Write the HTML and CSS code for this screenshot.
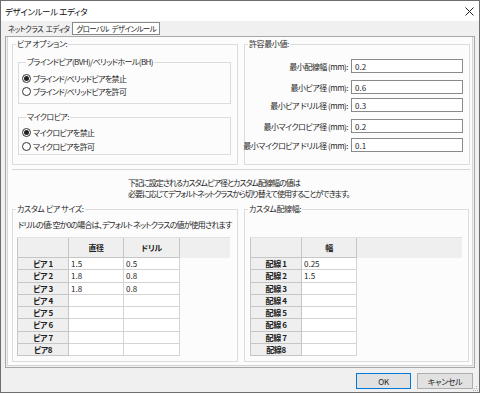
FILE: index.html
```html
<!DOCTYPE html>
<html lang="ja">
<head>
<meta charset="utf-8">
<title>デザインルール エディタ</title>
<link rel="stylesheet" href="styles.css">
</head>
<body>
<div class="win">
  <div class="titlebar">
    <span class="title">デザインルール エディタ</span>
    <svg class="close" width="9" height="9" viewBox="0 0 9 9"><path d="M0.5 0.5L8.5 8.5M8.5 0.5L0.5 8.5" stroke="#222" stroke-width="1" fill="none"/></svg>
  </div>
  <div class="tabs">
    <span class="tab">ネットクラス エディタ</span>
    <span class="tab sel">グローバル デザインルール</span>
  </div>
  <div class="panel">
    <div class="inner">
      <div class="row toprow">
        <fieldset class="grp grp-top">
          <legend>ビア オプション:</legend>
          <fieldset class="sub sub1">
            <legend>ブラインドビア(BVH)/ベリッドホール(BH)</legend>
            <div class="radio r13"><span class="dot on"></span>ブラインド/ベリッドビアを禁止</div>
            <div class="radio r13"><span class="dot"></span>ブラインド/ベリッドビアを許可</div>
          </fieldset>
          <fieldset class="sub sub2">
            <legend>マイクロビア:</legend>
            <div class="radio r14"><span class="dot on"></span>マイクロビアを禁止</div>
            <div class="radio r14"><span class="dot"></span>マイクロビアを許可</div>
          </fieldset>
        </fieldset>
        <fieldset class="grp grp-top">
          <legend>許容最小値:</legend>
          <div class="field f1"><label>最小配線幅 (mm):</label><span class="input">0.2</span></div>
          <div class="field f2"><label>最小ビア径 (mm):</label><span class="input">0.6</span></div>
          <div class="field f3"><label>最小ビア ドリル径 (mm):</label><span class="input">0.3</span></div>
          <div class="field f2"><label>最小マイクロビア径 (mm):</label><span class="input">0.2</span></div>
          <div class="field f5"><label>最小マイクロビア ドリル径 (mm):</label><span class="input">0.1</span></div>
        </fieldset>
      </div>
      <div class="sep"></div>
      <div class="info">
        <div>下記に設定されるカスタムビア径とカスタム配線幅の値は</div>
        <div>必要に応じてデフォルトネットクラスから切り替えて使用することができます。</div>
      </div>
      <div class="row botrow">
        <fieldset class="grp grp-bot grp-left">
          <legend>カスタム ビア サイズ:</legend>
          <div class="note">ドリルの値: 空か0の場合は、デフォルト ネットクラスの値が使用されます</div>
          <div class="grid grid-via">
            <div class="ghead">
              <span class="hc corner"></span><span class="hc c1">直径</span><span class="hc c2">ドリル</span>
            </div>
            <div class="grow"><span class="rl">ビア 1</span><span class="dc c1">1.5</span><span class="dc c2">0.5</span></div>
            <div class="grow"><span class="rl">ビア 2</span><span class="dc c1">1.8</span><span class="dc c2">0.8</span></div>
            <div class="grow"><span class="rl">ビア 3</span><span class="dc c1">1.8</span><span class="dc c2">0.8</span></div>
            <div class="grow"><span class="rl">ビア 4</span><span class="dc c1"></span><span class="dc c2"></span></div>
            <div class="grow"><span class="rl">ビア 5</span><span class="dc c1"></span><span class="dc c2"></span></div>
            <div class="grow"><span class="rl">ビア 6</span><span class="dc c1"></span><span class="dc c2"></span></div>
            <div class="grow"><span class="rl">ビア 7</span><span class="dc c1"></span><span class="dc c2"></span></div>
            <div class="grow"><span class="rl">ビア8</span><span class="dc c1"></span><span class="dc c2"></span></div>
          </div>
        </fieldset>
        <fieldset class="grp grp-bot grp-right">
          <legend>カスタム配線幅:</legend>
          <div class="grid grid-track">
            <div class="ghead">
              <span class="hc corner"></span><span class="hc c1">幅</span>
            </div>
            <div class="grow"><span class="rl">配線 1</span><span class="dc c1">0.25</span></div>
            <div class="grow"><span class="rl">配線 2</span><span class="dc c1">1.5</span></div>
            <div class="grow"><span class="rl">配線 3</span><span class="dc c1"></span></div>
            <div class="grow"><span class="rl">配線 4</span><span class="dc c1"></span></div>
            <div class="grow"><span class="rl">配線 5</span><span class="dc c1"></span></div>
            <div class="grow"><span class="rl">配線 6</span><span class="dc c1"></span></div>
            <div class="grow"><span class="rl">配線 7</span><span class="dc c1"></span></div>
            <div class="grow"><span class="rl">配線8</span><span class="dc c1"></span></div>
          </div>
        </fieldset>
      </div>
    </div>
  </div>
  <div class="footer">
    <button class="btn ok">OK</button>
    <button class="btn">キャンセル</button>
    <svg class="grip" width="5" height="5" viewBox="0 0 5 5"><rect x="3" y="0" width="1" height="1" fill="#b0b0b0"/><rect x="1" y="2" width="1" height="1" fill="#b0b0b0"/><rect x="3" y="2" width="1" height="1" fill="#b0b0b0"/><rect x="0" y="4" width="1" height="1" fill="#b0b0b0"/><rect x="2" y="4" width="1" height="1" fill="#b0b0b0"/><rect x="4" y="4" width="1" height="1" fill="#b0b0b0"/></svg>
  </div>
</div>
</body>
</html>
```

FILE: styles.css
```css
* { box-sizing: border-box; margin: 0; padding: 0; }
html, body { width: 480px; height: 393px; overflow: hidden; }
body {
  font-family: "Noto Sans CJK JP", "Noto Sans", sans-serif;
  font-size: 8px;
  line-height: 11px;
  letter-spacing: -0.4px;
  color: #1e1e1e;
  font-feature-settings: "palt" 1;
  background: #f0f0f0;
}
.win {
  width: 480px; height: 393px;
  border: 1px solid #6e6e6e;
  background: #f0f0f0;
  display: flex; flex-direction: column;
}
.titlebar {
  height: 20px; flex: none;
  background: #fff;
  display: flex; align-items: center; justify-content: space-between;
  padding: 0 5px 0 4px;
}
.title { color: #111; font-size: 8.5px; }
.close { display: block; }
.tabs {
  height: 14px; flex: none; margin-top: 1px;
  display: flex; align-items: stretch;
  padding-left: 4px;
}
.tab {
  flex: none;
  min-width: 67px; height: 13px;
  display: flex; align-items: center; justify-content: center;
  padding: 0 3px;
  white-space: pre;
  font-size: 7.5px;
  letter-spacing: -0.6px;
  word-spacing: 1.5px;
}
.tab.sel {
  min-width: 81px;
  border: 1px solid #8a8a8a;
  background: #fff;
}
.panel {
  flex: none;
  height: 332px;
  margin: 0 4px 0 4px;
  border: 1px solid #a8a8a8;
  padding: 0 1px 1px 1px;
}
.inner {
  height: 100%;
  border: 1px solid #d6d6d6;
  border-top: 0;
  background: #fcfcfc;
  padding: 1px 0 0 4px;
  display: flex; flex-direction: column;
}
.row { display: flex; gap: 6px; }
fieldset {
  border: 1px solid #dcdcdc;
  min-width: 0;
}
legend {
  margin-left: 3px;
  padding: 0 1px;
  line-height: 12px;
  color: #2a2a2a;
  white-space: nowrap;
}
.grp { width: 226px; display: flex; flex-direction: column; }
.grp-top { height: 127px; }
.sub { margin-left: 5px; width: 213px; }
.sub legend { margin-left: 4px; letter-spacing: -0.6px; }
.sub1 { margin-top: 6px; padding: 4px 0 5px 3px; }
.sub2 { margin-top: 7px; padding: 2px 0 1px 3px; }
.radio { display: flex; align-items: center; white-space: nowrap; letter-spacing: -0.65px; }
.r13 { height: 13px; }
.r14 { height: 14px; }
.dot {
  flex: none;
  width: 9px; height: 9px;
  border: 1px solid #333;
  border-radius: 50%;
  margin-right: 2px;
  display: flex; align-items: center; justify-content: center;
  background: #fff;
}
.dot.on::after {
  content: ""; width: 5px; height: 5px; border-radius: 50%; background: #222;
}
.field {
  display: flex; justify-content: flex-end; align-items: center;
  padding-right: 6px;
  height: 14px;
}
.field label { margin-right: 3px; white-space: nowrap; letter-spacing: -0.5px; }
.f1 { margin-top: 9px; }
.f2 { margin-top: 7px; }
.f3 { margin-top: 4px; }
.f5 { margin-top: 5px; }
.input {
  flex: none;
  width: 112px; height: 14px;
  border: 1px solid #8a8a8a;
  background: #fff;
  padding-left: 3px;
  display: flex; align-items: center;
  letter-spacing: 0;
}
.sep {
  margin-top: 4px;
  width: 458px; height: 1px;
  background: #d6d6d6;
}
.info {
  margin-top: 7px;
  margin-left: 116px;
  white-space: nowrap;
  letter-spacing: -1px;
}
.botrow { margin-top: 4px; }
.grp-bot { height: 159px; }
.grp-right { width: 225px; }
.note { margin: 4px 0 0 5px; white-space: nowrap; letter-spacing: -0.8px; }
.grid { display: flex; flex-direction: column; }
.grid-via { margin: 7px 0 0 4px; width: 213px; }
.grid-track { margin: 22px 0 0 5px; width: 212px; }
.ghead {
  height: 21px; display: flex;
  background: #efefef;
  border-top: 1px solid #e2e2e2;
}
.hc {
  flex: none;
  display: flex; align-items: center; justify-content: center;
  font-weight: 700;
  border-right: 1px solid #c6c6c6;
  border-bottom: 1px solid #c6c6c6;
  color: #222;
}
.corner { width: 52px; border-left: 1px solid #c6c6c6; }
.c1 { width: 55px; }
.c2 { width: 56px; }
.grow { height: 12.25px; display: flex; }
.rl {
  flex: none;
  width: 52px;
  background: #efefef;
  border-left: 1px solid #c6c6c6;
  border-right: 1px solid #c6c6c6;
  border-bottom: 1px solid #c6c6c6;
  display: flex; align-items: center; justify-content: center;
  font-weight: 700;
  color: #222;
  white-space: nowrap;
}
.dc {
  flex: none;
  background: #fff;
  border-right: 1px solid #d4d4d4;
  border-bottom: 1px solid #d4d4d4;
  display: flex; align-items: center;
  padding-left: 2px;
  letter-spacing: 0;
}
.footer {
  flex: 1;
  display: flex; justify-content: flex-end; align-items: flex-start;
  gap: 6px;
  padding: 5px 6px 0 0;
  position: relative;
}
.btn {
  font: inherit;
  font-feature-settings: "palt" 1;
  letter-spacing: -0.4px;
  color: #1e1e1e;
  width: 56px; height: 16px;
  border: 1px solid #adadad;
  background: #e1e1e1;
  display: flex; align-items: center; justify-content: center;
}
.btn.ok { width: 55px; border-color: #0078d7; }
.grip { position: absolute; right: 1px; bottom: 1px; }
```
